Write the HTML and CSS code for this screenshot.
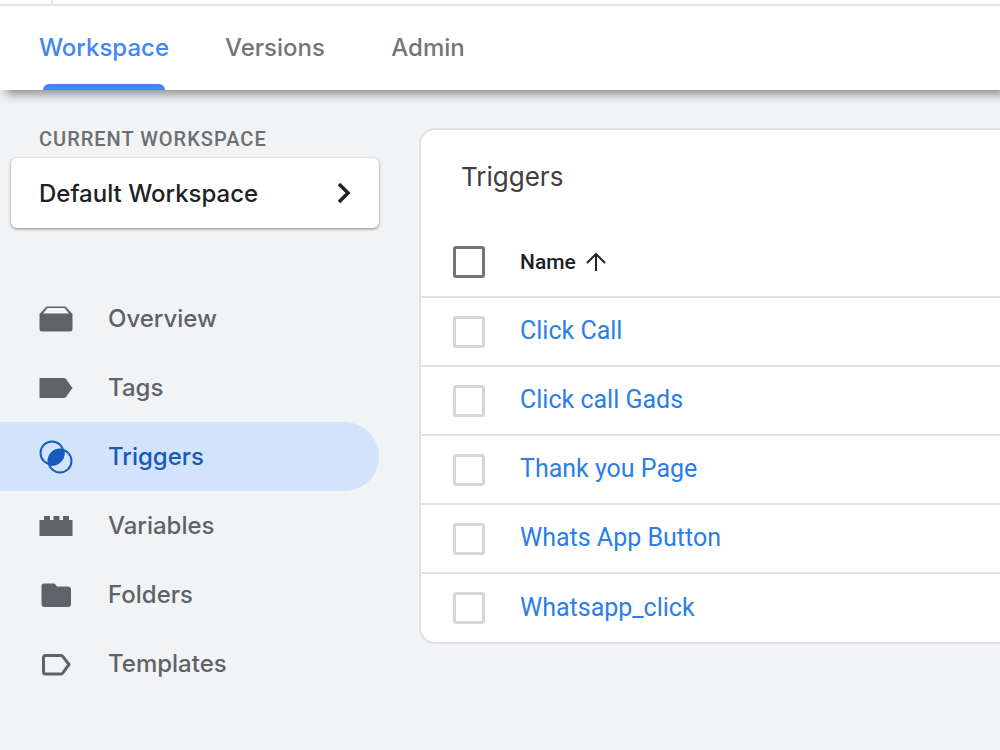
FILE: index.html
```
<!DOCTYPE html>
<html lang="en">

<head>
    <meta charset="UTF-8">
    <meta name="viewport" content="width=device-width, initial-scale=1">
    <title>Triggers</title>
    <link rel="stylesheet" href="styles.css">
</head>

<body>

    <header class="header">
        <div class="top-strip">
            <div class="top-strip-cell"></div>
        </div>
        <nav class="tabs">
            <a class="tab active" href="#workspace">Workspace</a>
            <a class="tab" href="#versions">Versions</a>
            <a class="tab" href="#admin">Admin</a>
        </nav>
    </header>

    <div class="page">
        <aside class="sidebar">
            <div class="workspace-label" id="workspace-label">CURRENT WORKSPACE</div>
            <button class="workspace-button" type="button" aria-describedby="workspace-label">
                <span>Default Workspace</span>
                <svg width="16" height="22" viewBox="0 0 16 22" fill="none" stroke="#202124" stroke-width="3.500">
                    <path d="M3 2l9 9-9 9" />
                </svg>
            </button>

            <nav class="menu">
                <a class="menu-item" href="#overview">
                    <svg class="icon" viewBox="0 0 34 34" fill="currentColor">
                        <path fill-rule="evenodd" d="M7.5 4.500h19L33.500 12v15q0 2.500-2.500 2.500H3Q.5 29.500.5 27V12zM8.500 6L4 11.500h26L25.500 6z" />
                    </svg>
                    <span>Overview</span>
                </a>
                <a class="menu-item" href="#tags">
                    <svg class="icon" viewBox="0 0 34 34" fill="currentColor">
                        <path d="M1 7h24q1 0 2 1l6.500 9L27 26q-1 1-2 1H1q-.5 0-.5-1V8q0-1 .5-1z" />
                    </svg>
                    <span>Tags</span>
                </a>
                <a class="menu-item active" href="#triggers">
                    <svg class="icon" viewBox="0 0 34 34" fill="none" stroke="currentColor" stroke-width="2">
                        <circle cx="13" cy="13" r="11.500" />
                        <circle cx="21" cy="21" r="11.500" />
                        <path fill="currentColor" stroke="none" d="M25 9.500A12.300 12.300 0 0 0 9.500 25A12.300 12.300 0 0 0 25 9.500z" />
                    </svg>
                    <span>Triggers</span>
                </a>
                <a class="menu-item" href="#variables">
                    <svg class="icon" viewBox="0 0 34 34" fill="currentColor">
                        <path d="M.5 11H5V7h6v4h3.500V7h6v4H24V7h6v4h3.500v16H.5z" />
                    </svg>
                    <span>Variables</span>
                </a>
                <a class="menu-item" href="#folders">
                    <svg class="icon" viewBox="0 0 34 34" fill="currentColor">
                        <path d="M5 5.500h9.500q1 0 1.700.8L18 8.500h11q3 0 3 3V26q0 3-3 3H5.500q-3 0-3-3V8q0-2.500 2.500-2.500z" />
                    </svg>
                    <span>Folders</span>
                </a>
                <a class="menu-item" href="#templates">
                    <svg class="icon" viewBox="0 0 34 34" fill="none" stroke="currentColor" stroke-width="3" stroke-linejoin="round">
                        <path d="M6.500 8.500H22q1 0 1.700.9L30 17.500l-6.300 8.600q-.7.900-1.700.9H6.500q-2 0-2-2V10.500q0-2 2-2z" />
                    </svg>
                    <span>Templates</span>
                </a>
            </nav>
        </aside>

        <main class="panel">
            <h1 class="panel-title">Triggers</h1>
            <table class="trigger-table">
                <thead>
                    <tr>
                        <th class="check-cell"><input type="checkbox" class="check check-all" aria-label="Select all"></th>
                        <th>
                            <button class="sort-button" type="button">
                                <span>Name</span>
                                <svg width="20" height="20" viewBox="0 0 20 20" fill="none" stroke="#202124" stroke-width="2">
                                    <path d="M10 19V2M1 11l9-9 9 9" />
                                </svg>
                            </button>
                        </th>
                    </tr>
                </thead>
                <tbody>
                    <tr>
                        <td class="check-cell"><input type="checkbox" class="check" aria-label="Click Call"></td>
                        <td><a href="#click-call">Click Call</a></td>
                    </tr>
                    <tr>
                        <td class="check-cell"><input type="checkbox" class="check" aria-label="Click call Gads"></td>
                        <td><a href="#click-call-gads">Click call Gads</a></td>
                    </tr>
                    <tr>
                        <td class="check-cell"><input type="checkbox" class="check" aria-label="Thank you Page"></td>
                        <td><a href="#thank-you-page">Thank you Page</a></td>
                    </tr>
                    <tr>
                        <td class="check-cell"><input type="checkbox" class="check" aria-label="Whats App Button"></td>
                        <td><a href="#whats-app-button">Whats App Button</a></td>
                    </tr>
                    <tr>
                        <td class="check-cell"><input type="checkbox" class="check" aria-label="Whatsapp_click"></td>
                        <td><a href="#whatsapp-click">Whatsapp_click</a></td>
                    </tr>
                </tbody>
            </table>
        </main>
    </div>

</body>

</html>
```
FILE: styles.css
```
* {
    box-sizing: border-box;
}

body {
    margin: 0;
    min-height: 100vh;
    background-color: #f1f3f4;
    color: #202124;
    font-family: Roboto, sans-serif;
}

a {
    text-decoration: none;
}

button {
    border: none;
    background: none;
    color: inherit;
    cursor: pointer;
}

.header {
    background-color: #ffffff;
    box-shadow: 6px 4px 10px rgba(0, 0, 0, 0.45);
}

.top-strip {
    height: 6px;
    border-bottom: 2px solid #e4e5e8;
}

.top-strip-cell {
    width: 53px;
    height: 4px;
    border-right: 2px solid #e4e5e8;
}

.tabs {
    display: flex;
    gap: 56px;
    padding: 0 39px;
}

.tab {
    display: flex;
    flex-direction: column;
    justify-content: space-between;
    min-width: 94px;
    height: 84px;
    padding-top: 27px;
    color: #757575;
    font-family: Inter, sans-serif;
    font-size: 24px;
    font-weight: 500;
    line-height: 30px;
    text-align: center;
}

.tab.active {
    color: #4285f4;
}

.tab.active::after {
    content: "";
    height: 6px;
    margin: 0 4px;
    background-color: #4285f4;
    border-radius: 6px 6px 0 0;
}

.page {
    display: flex;
    align-items: flex-start;
    gap: 40px;
    padding-top: 38px;
}

.sidebar {
    flex: none;
    width: 379px;
}

.workspace-label {
    padding-left: 39px;
    color: #6b6f74;
    font-size: 20px;
    font-weight: 500;
    letter-spacing: 1px;
    line-height: 22px;
}

.workspace-button {
    display: flex;
    align-items: center;
    justify-content: space-between;
    width: 368px;
    height: 70px;
    margin: 8px 0 0 11px;
    padding: 0 27px 0 28px;
    background-color: #ffffff;
    border-radius: 6px;
    box-shadow: 0 1px 3px rgba(0, 0, 0, 0.45);
    font-family: Inter, sans-serif;
    font-size: 24px;
    font-weight: 500;
}

.menu {
    margin-top: 56px;
}

.menu-item {
    display: flex;
    align-items: center;
    gap: 35px;
    height: 69px;
    padding-left: 39px;
    color: #5f6368;
    border-radius: 0 35px 35px 0;
    font-family: Inter, sans-serif;
    font-size: 24px;
    font-weight: 500;
}

.menu-item.active {
    background-color: #d2e3fc;
    color: #185abc;
}

.icon {
    width: 34px;
    height: 34px;
}

.panel {
    flex: 1;
    background-color: #ffffff;
    border: 2px solid #dfe1e5;
    border-right: none;
    border-radius: 16px 0 0 16px;
}

.panel-title {
    margin: 0;
    padding: 30px 40px 0;
    color: #3c4043;
    font-family: Inter, sans-serif;
    font-size: 26px;
    font-weight: 400;
    line-height: 34px;
}

.trigger-table {
    width: 100%;
    margin-top: 34px;
    border-collapse: collapse;
}

.trigger-table th,
.trigger-table td {
    height: 69px;
    padding: 0;
    text-align: left;
}

.trigger-table td {
    padding-bottom: 2px;
}

.trigger-table tbody tr {
    border-top: 2px solid #e1e3e6;
}

.trigger-table a {
    color: #2b7de9;
    font-size: 25px;
}

.trigger-table .check-cell {
    width: 99px;
    padding: 0 0 0 32px;
}

.check {
    display: block;
    appearance: none;
    width: 32px;
    height: 32px;
    margin: 0;
    border: 3px solid #d6d6d6;
    border-radius: 3px;
}

.check:checked {
    background-color: #4285f4;
}

.check-all {
    border-color: #757575;
}

.sort-button {
    display: flex;
    align-items: center;
    gap: 10px;
    padding: 0;
    font-family: Roboto, sans-serif;
    font-size: 21px;
    font-weight: 500;
}
```
